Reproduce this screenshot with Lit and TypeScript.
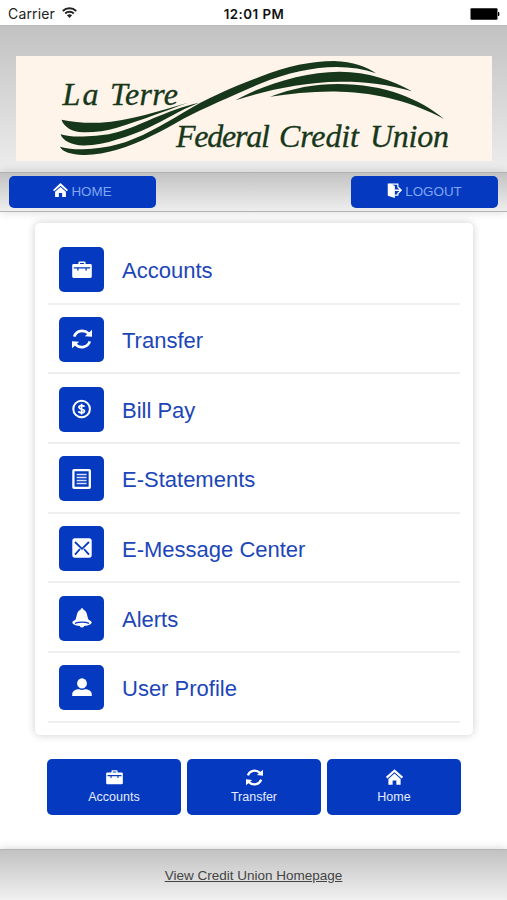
import { LitElement, html, svg, css } from "lit";
import { customElement, property } from "lit/decorators.js";

const icons: Record<string, unknown> = {
  briefcase: svg`<path fill-rule="evenodd" d="M6.4 4V2.800Q6.400 1.600 7.500 1.600h5Q13.600 1.600 13.600 2.800V4H18.400Q19.800 4 19.800 5.400V16.600Q19.800 18 18.400 18H1.600Q.2 18 .2 16.600V5.400Q.2 4 1.600 4ZM8 4h4V3H8Z"/><path class="cut" d="M1.800 7.800h16.400M5.900 7.800v2.800M14.100 7.800v2.800"/>`,
  sync: svg`<path class="line" stroke-width="2.700" d="M2.200 7.600C4.200 1.800 11.500-.1 16.600 4.600M17.800 12.400C15.800 18.200 8.500 20.100 3.400 15.400"/><path d="M20 .8V7.800L12.800 7.200ZM0 19.200V12.200L7.200 12.800Z"/>`,
  dollar: svg`<circle class="line" stroke-width="2" cx="9.600" cy="10" r="8.300"/><path class="line" stroke-width="1.700" d="M12.600 7.600C12.100 6.300 6.900 5.900 6.900 8.300S12.500 9.700 12.500 12.100S6.900 14 6.500 12.200M9.600 4.700V15.400"/>`,
  doc: svg`<rect class="line" stroke-width="2.300" x="1.400" y="1.200" width="16.400" height="17.600" rx=".6"/><path class="line" stroke-width="1.500" opacity=".85" d="M4.600 5.500H14.600M4.600 8.500H14.600M4.600 11.500H14.600M4.600 14.500H14.600"/>`,
  mail: svg`<rect x=".3" y=".3" width="19.400" height="19.400" rx="2.600"/><path class="cut thick" d="M3 4L10 10.800 17 4M3 16.600L8 11M17 16.600L12 11"/>`,
  bell: svg`<path d="M10 0Q11.300.5 11.500 1.800C15.500 3.400 15 8.500 16.300 11.300C17.300 12.700 19.700 13 19.700 14.600C19.700 16.500 15.500 18.200 10 18.200S.3 16.500.3 14.600C.3 13 2.700 12.700 3.700 11.300C5 8.500 4.500 3.400 8.500 1.800Q8.700.5 10 0Z"/><path class="cut" d="M3 15.400C6.500 13.600 13.500 13.600 17 15.400"/><circle cx="10" cy="17.300" r="2.300"/>`,
  user: svg`<ellipse cx="10" cy="5.400" rx="4.900" ry="5.200"/><path d="M.2 18V16.600C.2 13 3.500 11.300 7.300 11.300Q10 12.500 12.700 11.300C16.500 11.300 19.800 13 19.800 16.600V18Z"/>`,
  house: svg`<path class="line" stroke-width="2.600" d="M.8 10.200L10 1.900 19.200 10.200"/><path d="M2.800 11.800L10 5.200 17.200 11.800V18.600H12.200V13.400H7.800V18.600H2.800Z"/>`,
  exit: svg`<path d="M1 .6H4L10.500 4V20L1 17Z"/><path class="line" stroke-width="1.600" d="M4 1.400H14.500V6M14.500 13V16.200H10.500"/><path class="line" stroke-width="1.800" d="M10.500 9.600H18M14.800 5.600L18.900 9.600L14.800 13.600"/>`,
};

@customElement("app-icon")
class AppIcon extends LitElement {
  @property() name = "";
  static styles = css`
    :host { display: block; width: 20px; height: 20px; }
    svg { display: block; width: 100%; height: 100%; fill: #fff; }
    .line { fill: none; stroke: #fff; }
    .cut { fill: none; stroke: #0439c0; stroke-width: 1.3; }
    .thick { stroke-width: 1.8; }
  `;
  render() {
    return html`<svg viewBox="0 0 20 20">${icons[this.name]}</svg>`;
  }
}

@customElement("brand-logo")
class BrandLogo extends LitElement {
  static styles = css`
    :host { display: block; height: 105px; background: #fff4e9; }
    svg { display: block; width: 100%; height: 100%; }
    path { fill: #17371b; }
    text { font: italic 32px "Liberation Serif", serif; fill: #17371b; stroke: #17371b; stroke-width: 0.35; }
  `;
  render() {
    return html`<svg viewBox="16 56 476 105">
      <path d="M61.500 119.700C72 122 86 123.300 100 122.700C130 121 158 111 188 102.700C165 111 145 119 117 127.700C106 131 94 132.500 83 132.200C72 132 64 127 61.500 119.700Z"/>
      <path d="M60.500 134.200C68 136.500 76 136.800 83 136.400C95 136 106 135.500 117 132.300C140 126 165 110.500 199 102.700C178 111 165 120 150 127C139 132 128 136.500 117 139.600C106 143.500 94 145.600 83 145.400C72 145 63 141 60.500 134.200Z"/>
      <path d="M60 146.700C68 149 76 149.400 83 149.200C95 149 106 147.500 117 144.600C141 138 162 125 183 112.700C207 98 233 87 260 76.700C287 66 312 61 334 61C353 61.500 367 67 376 73.300C344 62 304 66 260 83.700C232 96 206 107 183 119C162 131 140 143 117 149.800C106 153 94 155.200 83 154.900C72 154.500 62 152 60 146.700Z"/>
      <path d="M235.500 100.300C262 85 305 71.500 340 71.700C368 72 392 80 412 91.300C388 84 364 81.500 340 81.700C301 82 265 91 235.500 100.300Z"/>
      <path d="M270 96.800C293 88 315 84 338 84C385 84 420 99 444 119C415 103 378 92.500 340 91.700C315 91 292 93.500 270 96.800Z"/>
      <text x="62.500" y="105" textLength="36">La</text>
      <text x="110" y="105" textLength="68">Terre</text>
      <text x="176" y="147.300" textLength="94">Federal</text>
      <text x="279" y="147.300" textLength="80">Credit</text>
      <text x="370" y="147.300" textLength="79">Union</text>
    </svg>`;
  }
}

const menu = [
  ["briefcase", "Accounts"],
  ["sync", "Transfer"],
  ["dollar", "Bill Pay"],
  ["doc", "E-Statements"],
  ["mail", "E-Message Center"],
  ["bell", "Alerts"],
  ["user", "User Profile"],
];
const shortcuts = [
  ["briefcase", "Accounts"],
  ["sync", "Transfer"],
  ["house", "Home"],
];

@customElement("app-root")
class AppRoot extends LitElement {
  static styles = css`
    :host {
      display: flex; flex-direction: column; height: 900px; overflow: hidden;
      background: #fff; font-family: "Liberation Sans", Arial, sans-serif;
    }
    * { box-sizing: border-box; }
    .status {
      display: grid; grid-template-columns: 1fr auto 1fr; align-items: center;
      height: 25px; padding: 2px 7px 0 8px; font: 14px Inter, sans-serif; color: #222;
    }
    .carrier { display: flex; align-items: center; gap: 7px; letter-spacing: 0.15px; }
    .wifi { width: 15px; height: 11px; margin-top: -2px; }
    .time { font-weight: 600; font-size: 13.3px; color: #111; letter-spacing: 0.5px; }
    .battery { justify-self: end; width: 30px; height: 12px; }
    header {
      height: 147px; padding: 30px 15px 0 16px; border-top: 1px solid #b9b9b9;
      background: linear-gradient(#c2c2c2, #ededed);
    }
    nav {
      display: flex; justify-content: space-between; align-items: flex-start;
      height: 40px; padding: 3px 9px 0; border-top: 1px solid #b2b2b2; border-bottom: 1px solid #b4b4b4;
      background: linear-gradient(#c3c3c3, #eeeeee);
      box-shadow: 0 0 9px rgba(0, 0, 0, 0.16);
    }
    .nav-button {
      display: flex; align-items: center; justify-content: center; gap: 3px;
      width: 147px; height: 32px; padding-bottom: 1px; border-radius: 5px; background: #0439c0;
      color: #83a6f2; font-size: 13.4px;
    }
    .nav-button app-icon { width: 15px; height: 15px; margin-top: -2px; }
    main { flex: 1; padding: 11px 34px 0 35px; }
    .card {
      height: 512px; padding: 12px 13px 0; border-radius: 5px; background: #fff;
      box-shadow: 0 0 8px rgba(0, 0, 0, 0.2);
    }
    .row {
      display: flex; align-items: center; gap: 18px; height: 69.67px; padding: 2px 0 0 11px;
      border-bottom: 2px solid #efefef; color: #1c46b8; font-size: 22px;
    }
    .tile {
      display: flex; align-items: center; justify-content: center;
      width: 45px; height: 45px; border-radius: 5px; background: #0439c0;
    }
    .label { padding-top: 3px; }
    .shortcuts { display: flex; gap: 6px; padding: 24px 12px 0; }
    .shortcut {
      display: flex; flex-direction: column; align-items: center; gap: 4px; flex: 1;
      height: 56px; padding-top: 10px; border-radius: 5px; background: #0439c0;
      color: #e6edff; font-size: 12.5px;
    }
    .shortcut app-icon { width: 17px; height: 17px; }
    footer {
      height: 51px; padding-top: 18px; text-align: center; font-size: 13.5px; line-height: 16px;
      color: #444; border-top: 1px solid #b4b4b4; background: linear-gradient(#c2c2c2, #f0f0f0);
      box-shadow: 0 0 9px rgba(0, 0, 0, 0.18); text-decoration: underline;
    }
  `;
  render() {
    return html`
      <div class="status">
        <div class="carrier">Carrier
          <svg class="wifi" viewBox="0 0 15 11"><g fill="none" stroke="#222" stroke-width="1.900"><path d="M.8 4C4.500.3 10.500.3 14.200 4"/><path d="M3.200 6.500C5.600 4.200 9.400 4.200 11.800 6.500"/></g><path fill="#222" d="M7.500 11L4.900 8.300Q7.500 6.200 10.100 8.300Z"/></svg>
        </div>
        <div class="time">12:01 PM</div>
        <svg class="battery" viewBox="0 0 30 12"><rect x=".5" y=".3" width="27" height="11.400" rx="1"/><path d="M28 4h1q1 2 0 4h-1z"/></svg>
      </div>
      <header><brand-logo></brand-logo></header>
      <nav>
        <div class="nav-button"><app-icon name="house"></app-icon>HOME</div>
        <div class="nav-button"><app-icon name="exit"></app-icon>LOGOUT</div>
      </nav>
      <main>
        <div class="card">
          ${menu.map(([icon, label]) => html`<div class="row"><div class="tile"><app-icon name=${icon}></app-icon></div><div class="label">${label}</div></div>`)}
        </div>
        <div class="shortcuts">
          ${shortcuts.map(([icon, label]) => html`<div class="shortcut"><app-icon name=${icon}></app-icon><div>${label}</div></div>`)}
        </div>
      </main>
      <footer>View Credit Union Homepage</footer>
    `;
  }
}
